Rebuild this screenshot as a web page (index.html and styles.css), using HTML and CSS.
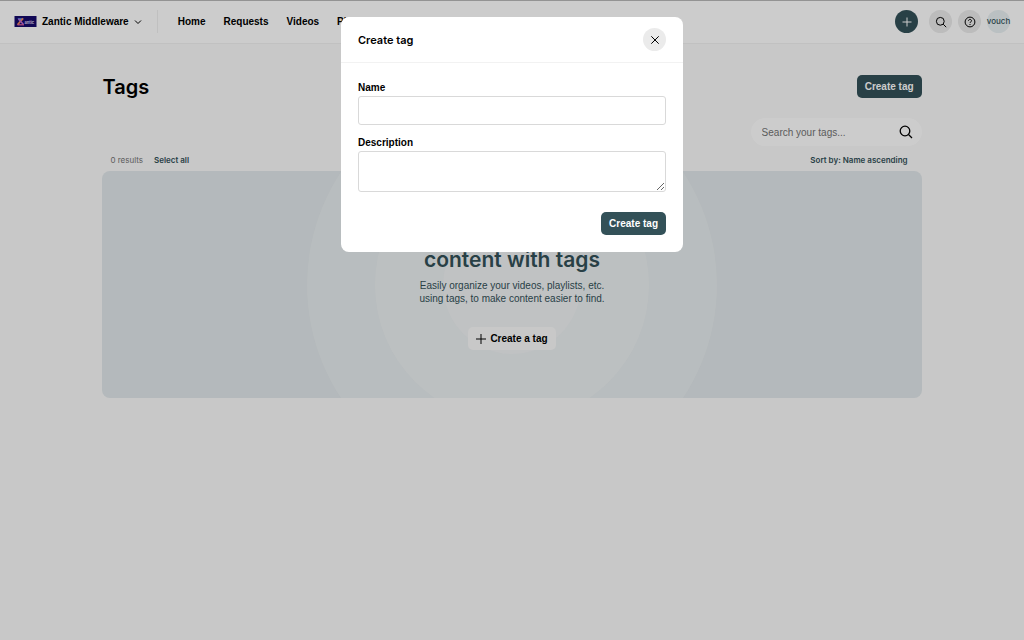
FILE: index.html
```html
<!DOCTYPE html>
<html lang="en">
<head>
<meta charset="utf-8">
<meta name="viewport" content="width=device-width, initial-scale=1">
<title>Tags</title>
<link rel="stylesheet" href="styles.css">
</head>
<body>
<header class="topbar">
  <button class="workspace" type="button">
    <svg class="workspace-logo" viewBox="0 0 22 11" aria-hidden="true">
      <rect width="22" height="11" fill="#160b6b"/>
      <path d="M3 2.200h6L7.500 4 6 5.600 4.500 4z" fill="#5f9df0"/>
      <path d="M8.600 2.400 3 8.800" stroke="#f08a5c" stroke-width="1.700"/>
      <path d="M4 3l5 5.600" stroke="#b86bd8" stroke-width="1.500"/>
      <path d="M3 8.800h6.500" stroke="#e565a0" stroke-width="1.200"/>
      <text class="logo-text" x="10" y="7.500">antic</text>
    </svg>
    <span>Zantic Middleware</span>
    <svg class="chevron" viewBox="0 0 8 8" aria-hidden="true"><path d="M1 2.500l3 3 3-3"/></svg>
  </button>
  <nav class="nav">
    <a href="#">Home</a>
    <a href="#">Requests</a>
    <a href="#">Videos</a>
    <a href="#">Playlists</a>
  </nav>
  <div class="actions">
    <button class="round round-primary" type="button" aria-label="Create"><svg viewBox="0 0 12 12" aria-hidden="true"><path d="M6 1.500v9M1.500 6h9"/></svg></button>
    <button class="round" type="button" aria-label="Search"><svg viewBox="0 0 12 12" aria-hidden="true"><circle cx="5.300" cy="5.300" r="3.900"/><path d="M8.200 8.200l3 3"/></svg></button>
    <button class="round" type="button" aria-label="Help"><svg viewBox="0 0 12 12" aria-hidden="true"><circle cx="6" cy="6" r="4.900"/><path d="M4.500 4.900c0-2 3-2 3 0 0 1-1.500 1-1.500 2M6 8v1"/></svg></button>
    <button class="round avatar" type="button">vouch</button>
  </div>
</header>
<main class="page">
  <div class="page-head">
    <h1>Tags</h1>
    <button class="btn" type="button">Create tag</button>
  </div>
  <label class="search">
    <input type="search" placeholder="Search your tags..." aria-label="Search your tags">
    <svg viewBox="0 0 14 14" aria-hidden="true"><circle cx="6" cy="6" r="4.800"/><path d="M9.500 9.500l3.500 3.500"/></svg>
  </label>
  <div class="list-bar">
    <span>0 results</span>
    <button class="link" type="button">Select all</button>
    <button class="link sort" type="button">Sort by: Name ascending</button>
  </div>
  <section class="banner">
    <svg class="rings" viewBox="0 0 410 410" aria-hidden="true"><circle cx="205" cy="205" r="205"/><circle cx="205" cy="205" r="137"/><circle cx="205" cy="205" r="69"/></svg>
    <div class="banner-body">
      <h2>Organize your<br>content with tags</h2>
      <p>Easily organize your videos, playlists, etc.<br>using tags, to make content easier to find.</p>
      <button class="btn btn-light" type="button"><svg viewBox="0 0 10 10" aria-hidden="true"><path d="M5 0v10M0 5h10"/></svg>Create a tag</button>
    </div>
  </section>
</main>
<div class="overlay">
  <div class="dialog" role="dialog" aria-modal="true" aria-labelledby="dialog-title">
    <div class="dialog-head">
      <h2 id="dialog-title">Create tag</h2>
      <button class="round close" type="button" aria-label="Close"><svg viewBox="0 0 12 12" aria-hidden="true"><path d="M2.300 2.300l7.400 7.400M9.700 2.300l-7.400 7.400"/></svg></button>
    </div>
    <form class="dialog-form">
      <label for="tag-name">Name</label>
      <input id="tag-name" type="text">
      <label for="tag-description">Description</label>
      <textarea id="tag-description"></textarea>
      <button class="btn" type="submit">Create tag</button>
    </form>
  </div>
</div>
</body>
</html>
```

FILE: styles.css
```css
* { box-sizing: border-box; }

body {
  margin: 0;
  min-height: 100vh;
  border-top: 1px solid #b8b8b8;
  background: #fafafa;
  color: #000;
  font: 10px/13px "Liberation Sans", Arial, sans-serif;
}

button, input, textarea { font: inherit; color: inherit; }
button { margin: 0; padding: 0; border: 0; background: none; cursor: pointer; }
h1, h2, p { margin: 0; }
h1, h2, .list-bar, .avatar { font-family: Inter, "Liberation Sans", sans-serif; }
svg { display: block; flex: none; fill: none; stroke: currentColor; }

.topbar {
  display: flex;
  align-items: center;
  padding: 9px 14px 10px;
  border-bottom: 1px solid #f2f2f2;
  background: #fff;
  font-weight: 600;
}
.workspace {
  display: flex;
  align-items: center;
  gap: 5px;
  height: 23px;
  padding-right: 15px;
  border-right: 1px solid #f0f0f0;
  font-weight: 600;
}
.workspace-logo { width: 23px; height: 11px; stroke: none; }
.logo-text { fill: #d6cdf5; stroke: none; font: 700 4px Inter, sans-serif; }
.chevron { width: 8px; height: 8px; }
.nav { display: flex; gap: 18px; padding-left: 20px; }
.nav a { color: inherit; text-decoration: none; }
.actions { display: flex; align-items: center; gap: 6px; margin-left: auto; }

.round {
  display: flex;
  align-items: center;
  justify-content: center;
  width: 23px;
  height: 23px;
  border-radius: 50%;
  background: #ebebeb;
}
.round svg { width: 12px; height: 12px; }
.round-primary { margin-right: 5px; background: #335158; color: #fff; }
.avatar { background: #e9f1f3; color: #335158; font-size: 8px; font-weight: 500; }

.page { width: 80%; margin: 0 auto; padding-top: 31px; }
.page-head { display: flex; align-items: flex-start; justify-content: space-between; }
h1 { font-size: 20px; line-height: 24px; font-weight: 600; }

.btn {
  display: flex;
  align-items: center;
  justify-content: center;
  gap: 4px;
  height: 23px;
  padding: 0 8px;
  border-radius: 5px;
  background: #335158;
  color: #fff;
  font-weight: 600;
}

.search {
  display: flex;
  align-items: center;
  width: 171px;
  height: 28px;
  margin: 19px 0 0 auto;
  padding: 0 9px 0 11px;
  border-radius: 14px;
  background: #fff;
}
.search input { flex: 1; min-width: 0; padding: 0; border: 0; outline: 0; background: none; appearance: none; }
.search input::placeholder { color: #737373; opacity: 1; }
.search svg { width: 14px; height: 14px; stroke-width: 1.3; }

.list-bar {
  display: flex;
  align-items: center;
  gap: 11px;
  padding: 8px 14px 4px 8px;
  color: #757575;
  font-size: 8px;
}
.link { color: #335158; font-weight: 600; }
.sort { margin-left: auto; }

.banner {
  position: relative;
  overflow: hidden;
  padding: 48px 0;
  border-radius: 8px;
  background: #e1e8eb;
  color: #335158;
  text-align: center;
}
.rings {
  position: absolute;
  top: 50%;
  left: 50%;
  width: 410px;
  transform: translate(-50%, -50%);
  fill: rgba(250, 250, 250, 0.25);
  stroke: none;
}
.banner-body { position: relative; display: flex; flex-direction: column; align-items: center; }
.banner h2 { font-size: 21px; line-height: 27px; font-weight: 600; }
.banner p { margin: 6px 0 22px; }
.btn-light { background: #fafafa; color: #000; }
.btn-light svg { width: 10px; height: 10px; }

.overlay {
  position: fixed;
  inset: 0;
  display: flex;
  align-items: flex-start;
  justify-content: center;
  padding-top: 17px;
  background: rgba(0, 0, 0, 0.2);
}
.dialog { width: 100%; max-width: 342px; border-radius: 8px; background: #fff; }
.dialog-head {
  display: flex;
  align-items: center;
  justify-content: space-between;
  padding: 11px 17px;
  border-bottom: 1px solid #f2f2f2;
}
.dialog-head h2 { font-size: 11px; line-height: 14px; font-weight: 600; }
.dialog-form { display: flex; flex-direction: column; padding: 18px 17px 17px; }
.dialog-form label { margin-bottom: 2px; font-weight: 600; }
.dialog-form input, .dialog-form textarea {
  width: 100%;
  height: 29px;
  margin: 0 0 11px;
  padding: 6px 8px;
  border: 1px solid #d9d9d9;
  border-radius: 3px;
  background: #fff;
}
.dialog-form textarea { height: 41px; margin-bottom: 20px; resize: vertical; }
.dialog-form .btn { align-self: flex-end; }
```
